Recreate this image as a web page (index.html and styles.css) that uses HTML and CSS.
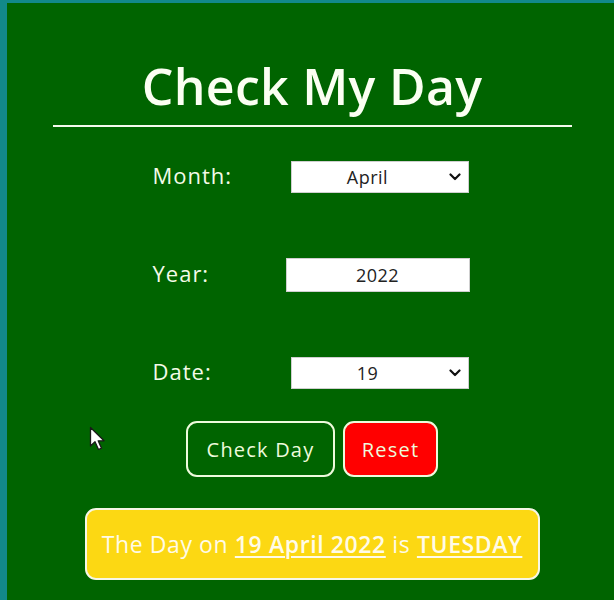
FILE: index.html
```html
<!DOCTYPE html>
<html lang="en">
<head>
<meta charset="utf-8">
<title>Check My Day</title>
<link rel="stylesheet" href="styles.css">
</head>
<body>
<main class="app">
  <h1 class="title">Check My Day</h1>
  <hr class="rule">
  <form class="form">
    <label class="label" for="month">Month:</label>
    <div class="select-wrap">
      <select id="month" class="control select">
        <option>April</option>
      </select>
      <svg class="chev" viewBox="0 0 12 8" width="12" height="8"><path d="M1.5 1.5 L6 6 L10.5 1.5" fill="none" stroke="#111" stroke-width="2.2" stroke-linecap="round" stroke-linejoin="round"/></svg>
    </div>
    <label class="label" for="year">Year:</label>
    <input id="year" class="control input" type="text" value="2022">
    <label class="label" for="date">Date:</label>
    <div class="select-wrap">
      <select id="date" class="control select">
        <option>19</option>
      </select>
      <svg class="chev" viewBox="0 0 12 8" width="12" height="8"><path d="M1.5 1.5 L6 6 L10.5 1.5" fill="none" stroke="#111" stroke-width="2.2" stroke-linecap="round" stroke-linejoin="round"/></svg>
    </div>
  </form>
  <div class="buttons">
    <button class="btn btn-check" type="button">Check Day</button>
    <button class="btn btn-reset" type="button">Reset</button>
  </div>
  <div class="result"><p class="result-text">The Day on <u class="em">19 April 2022</u> is <u class="em">TUESDAY</u></p></div>
  <svg class="cursor" viewBox="0 0 17 26" width="17" height="26"><path d="M1.5 1.5 L1.5 20 L6 15.8 L9.5 23.5 L12.5 22.2 L9.2 14.8 L15 14.8 Z" fill="#fff" stroke="#1a1a1a" stroke-width="1.3" stroke-linejoin="round"/></svg>
</main>
</body>
</html>
```
FILE: styles.css
```css
html, body {
  margin: 0;
  padding: 0;
  height: 100%;
  background: #12898a;
  overflow: hidden;
}
body {
  font-family: "Open Sans", "Noto Sans", sans-serif;
}
.app {
  position: relative;
  margin: 3px 0 0 7px;
  height: 597px;
  background: #006400;
  box-sizing: border-box;
  padding: 0 0 0 3px;
  display: flex;
  flex-direction: column;
  align-items: center;
}
.title {
  margin: 54px 0 0;
  color: #fbfff2;
  font-size: 50px;
  font-weight: 600;
  line-height: 59px;
  letter-spacing: 0.3px;
}
.rule {
  width: 519px;
  margin: 9px 0 0;
  border: 0;
  height: 2px;
  background: #f4f9ec;
}
.form {
  margin-top: 34px;
  display: grid;
  grid-template-columns: 135px 184px;
  row-gap: 65px;
  align-items: center;
}
.label {
  color: #f4fbe8;
  font-size: 22px;
  font-weight: 500;
  letter-spacing: 1px;
  line-height: 26px;
  margin-top: -4px;
}
.select-wrap {
  position: relative;
  width: 178px;
  justify-self: center;
}
.control {
  box-sizing: border-box;
  font-family: inherit;
  font-size: 18px;
  color: #222;
  background: #fff;
  border: 1px solid #cfcfcf;
  border-radius: 0;
  outline: none;
  letter-spacing: 0.5px;
}
.select {
  -webkit-appearance: none;
  appearance: none;
  width: 178px;
  height: 32px;
  padding: 0 30px 0 6px;
  text-align: center;
  text-align-last: center;
}
.chev {
  position: absolute;
  right: 8px;
  top: 12px;
  pointer-events: none;
}
.input {
  width: 184px;
  height: 34px;
  text-align: center;
  padding: 0;
  margin-left: -2px;
}
.buttons {
  margin-top: 32px;
  display: flex;
  gap: 8px;
}
.btn {
  height: 56px;
  border: 2px solid #eefbdc;
  border-radius: 11px;
  color: #eefbdc;
  font-family: inherit;
  font-size: 20px;
  letter-spacing: 1.2px;
  padding: 0;
}
.btn-check {
  width: 149px;
  background: #006400;
}
.btn-reset {
  width: 95px;
  background: #ff0000;
}
.result {
  margin-top: 31px;
  box-sizing: border-box;
  width: 455px;
  height: 72px;
  background: #fcd813;
  border: 2px solid #f6f7e6;
  border-radius: 11px;
  display: flex;
  align-items: center;
  justify-content: center;
}
.result-text {
  margin: 0;
  color: #fffbe8;
  font-size: 23px;
  letter-spacing: 0.6px;
  white-space: nowrap;
}
.em {
  font-weight: 600;
  text-decoration-thickness: 2px;
  text-underline-offset: 3px;
}
.cursor {
  position: absolute;
  left: 82px;
  top: 423px;
}
```
